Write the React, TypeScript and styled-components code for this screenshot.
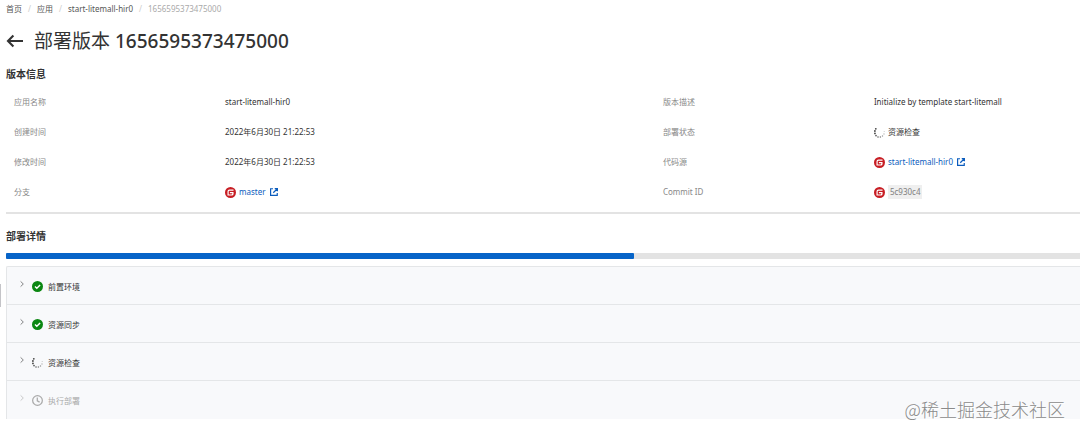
import React from "react";
import styled, { createGlobalStyle } from "styled-components";

const GlobalStyle = createGlobalStyle`
  * { box-sizing: border-box; }
  body {
    margin: 0;
    background: #fff;
    color: #333;
    font-family: "Noto Sans", "Noto Sans CJK SC", sans-serif;
    font-size: 8px;
    line-height: 12px;
  }
`;

const Page = styled.main`
  position: relative;
  padding: 3px 0 16px 6px;
`;

const Breadcrumb = styled.nav`
  display: flex;
  gap: 6px;
  color: #ccc;
`;

const Crumb = styled.a<{ $current?: boolean }>`
  color: ${(p) => (p.$current ? "#aaa" : "#555")};
  text-decoration: none;
`;

const TitleBar = styled.header`
  display: flex;
  align-items: center;
  gap: 11px;
  height: 32px;
  margin-top: 10px;
`;

const BackButton = styled.button`
  display: flex;
  padding: 0;
  border: 0;
  background: none;
  color: #333;
`;

const Title = styled.h1`
  margin: 0;
  font-size: 19px;
  line-height: 32px;
  font-weight: 400;
  white-space: nowrap;
`;

const VersionNumber = styled.span`
  font-weight: 500;
`;

const SectionTitle = styled.h2`
  margin: 0;
  font-size: 10px;
  line-height: 16px;
  font-weight: 700;
`;

const InfoSection = styled.section`
  padding: 9px 0 5px;
  border-bottom: 2px solid #e3e3e3;
`;

const InfoGrid = styled.dl`
  display: grid;
  grid-template-columns: 211px 17fr 211px 8fr;
  grid-auto-rows: 30px;
  align-items: center;
  margin: 5px 0 0;
  padding-left: 8px;
`;

const Term = styled.dt`
  color: #888;
`;

const Value = styled.dd`
  display: flex;
  align-items: center;
  gap: 3px;
  margin: 0;
  white-space: nowrap;
`;

const ExternalLink = styled.a`
  display: flex;
  align-items: center;
  gap: 4px;
  color: #0b5cbd;
  text-decoration: none;
`;

const Commit = styled.code`
  padding: 1px 2px;
  background: #efefef;
  color: #808080;
  font-family: inherit;
`;

const DetailSection = styled.section`
  padding-top: 14px;
`;

const Progress = styled.div`
  height: 6px;
  margin-top: 9px;
  background: #e3e3e3;
`;

const ProgressFill = styled.div`
  height: 100%;
  border-radius: 1px;
  background: #0764c8;
`;

const StepList = styled.ul`
  margin: 7px 0 0;
  padding: 0 0 1px;
  list-style: none;
  border: 1px solid #e4e6e8;
  border-width: 1px 0 0 1px;
  border-radius: 2px 0 0 0;
  background: #f8f9fb;
`;

const Step = styled.li`
  & + & { border-top: 1px solid #e4e6e8; }
`;

const StepButton = styled.button<{ $pending?: boolean }>`
  display: flex;
  align-items: center;
  gap: 5px;
  width: 100%;
  height: 37px;
  padding: 2px 0 0 12px;
  border: 0;
  background: none;
  color: ${(p) => (p.$pending ? "#aaa" : "#333")};
  font: inherit;
  text-align: left;
`;

const ChevronBox = styled.span`
  display: flex;
  padding-bottom: 5px;
  margin-right: 2px;
  opacity: 0.75;
`;

const Watermark = styled.div`
  position: absolute;
  right: 15px;
  bottom: 13px;
  color: #8a8a8a;
  font-family: "Noto Sans CJK SC", sans-serif;
  font-size: 18px;
  font-weight: 300;
  line-height: 26px;
  text-shadow: 1px 1px 0 #fff;
`;

const Handle = styled.div`
  position: absolute;
  left: 0;
  top: 284px;
  width: 1px;
  height: 23px;
  background: #c4c4c8;
`;

const BackIcon = () => (
  <svg width="17" height="14" viewBox="0 0 17 14" fill="none" stroke="currentColor" strokeWidth="2.1">
    <path d="M7.4 1.6 2 7l5.4 5.4M2 7h15" />
  </svg>
);

const GiteeIcon = () => (
  <svg width="11" height="11" viewBox="0 0 24 24">
    <circle cx="12" cy="12" r="12" fill="#c71d23" />
    <path
      fill="#fff"
      d="M18.1 5.3H9.8a4.4 4.4 0 0 0-4.4 4.5v8.3c0 .3.2.6.6.6h8.7a3.9 3.9 0 0 0 4-4v-3.3a.6.6 0 0 0-.6-.6h-6.8a.6.6 0 0 0-.6.6v1.5c0 .3.3.6.6.6h4.1c.3 0 .6.3.6.6v.3c0 1-.8 1.8-1.8 1.8H8.6a.6.6 0 0 1-.6-.6V9.9c0-1 .8-1.8 1.8-1.8h8.3c.3 0 .6-.3.6-.6V5.9a.6.6 0 0 0-.6-.6Z"
    />
  </svg>
);

const ExternalIcon = () => (
  <svg width="8" height="8" viewBox="0 0 16 16" fill="none" stroke="currentColor" strokeWidth="2.4">
    <path d="M6 1.5H1.2v13.3h13.3V10M6.5 9.5 14.5 1.5M9.5 1.2h5.3v5.3" />
  </svg>
);

const SpinnerIcon = () => (
  <svg width="11" height="11" viewBox="0 0 22 22" fill="#444">
    <circle cx="3.6" cy="3.6" r="1.8" />
    <circle cx="1.8" cy="8" r="1.8" />
    <circle cx="1.9" cy="12.8" r="1.8" />
    <circle cx="4" cy="17.2" r="1.7" opacity=".9" />
    <circle cx="8" cy="20" r="1.6" opacity=".8" />
    <circle cx="12.8" cy="20.2" r="1.5" opacity=".7" />
    <circle cx="17" cy="18" r="1.4" opacity=".55" />
    <circle cx="20" cy="14" r="1.3" opacity=".4" />
    <circle cx="20.4" cy="9" r="1.1" opacity=".3" />
  </svg>
);

const SuccessIcon = () => (
  <svg width="11" height="11" viewBox="0 0 22 22">
    <circle cx="11" cy="11" r="11" fill="#0b8712" />
    <path d="m6 11.2 3.6 3.5 6.6-6.6" fill="none" stroke="#fff" strokeWidth="2.8" />
  </svg>
);

const ClockIcon = () => (
  <svg width="11" height="11" viewBox="0 0 22 22" fill="none" stroke="#aaa" strokeWidth="2.5">
    <circle cx="11" cy="11" r="9.7" />
    <path d="M10.6 4.8v6.8l4.6 2.6" />
  </svg>
);

const ChevronIcon = () => (
  <svg width="6" height="8" viewBox="0 0 6 8" fill="none" stroke="currentColor" strokeWidth="0.8">
    <path d="m1.6 1.4 2.7 2.6-2.7 2.6" />
  </svg>
);

const steps = [
  { name: "前置环境", icon: <SuccessIcon /> },
  { name: "资源同步", icon: <SuccessIcon /> },
  { name: "资源检查", icon: <SpinnerIcon /> },
  { name: "执行部署", icon: <ClockIcon />, pending: true },
];

export default function App() {
  const progress = 58.5;
  return (
    <Page>
      <GlobalStyle />
      <Breadcrumb>
        <Crumb href="#home">首页</Crumb>
        <span>/</span>
        <Crumb href="#apps">应用</Crumb>
        <span>/</span>
        <Crumb href="#app">start-litemall-hir0</Crumb>
        <span>/</span>
        <Crumb as="span" $current>1656595373475000</Crumb>
      </Breadcrumb>

      <TitleBar>
        <BackButton aria-label="返回"><BackIcon /></BackButton>
        <Title>部署版本 <VersionNumber>1656595373475000</VersionNumber></Title>
      </TitleBar>

      <InfoSection>
        <SectionTitle>版本信息</SectionTitle>
        <InfoGrid>
          <Term>应用名称</Term>
          <Value>start-litemall-hir0</Value>
          <Term>版本描述</Term>
          <Value>Initialize by template start-litemall</Value>
          <Term>创建时间</Term>
          <Value>2022年6月30日 21:22:53</Value>
          <Term>部署状态</Term>
          <Value><SpinnerIcon />资源检查</Value>
          <Term>修改时间</Term>
          <Value>2022年6月30日 21:22:53</Value>
          <Term>代码源</Term>
          <Value>
            <GiteeIcon />
            <ExternalLink href="#source">start-litemall-hir0<ExternalIcon /></ExternalLink>
          </Value>
          <Term>分支</Term>
          <Value>
            <GiteeIcon />
            <ExternalLink href="#branch">master<ExternalIcon /></ExternalLink>
          </Value>
          <Term>Commit ID</Term>
          <Value><GiteeIcon /><Commit>5c930c4</Commit></Value>
        </InfoGrid>
      </InfoSection>

      <DetailSection>
        <SectionTitle>部署详情</SectionTitle>
        <Progress role="progressbar" aria-label="部署进度" aria-valuenow={progress}>
          <ProgressFill style={{ width: `${progress}%` }} />
        </Progress>
        <StepList>
          {steps.map((s) => (
            <Step key={s.name}>
              <StepButton $pending={s.pending} aria-expanded={false}>
                <ChevronBox><ChevronIcon /></ChevronBox>
                {s.icon}
                {s.name}
              </StepButton>
            </Step>
          ))}
        </StepList>
      </DetailSection>

      <Watermark>@稀土掘金技术社区</Watermark>
      <Handle />
    </Page>
  );
}
